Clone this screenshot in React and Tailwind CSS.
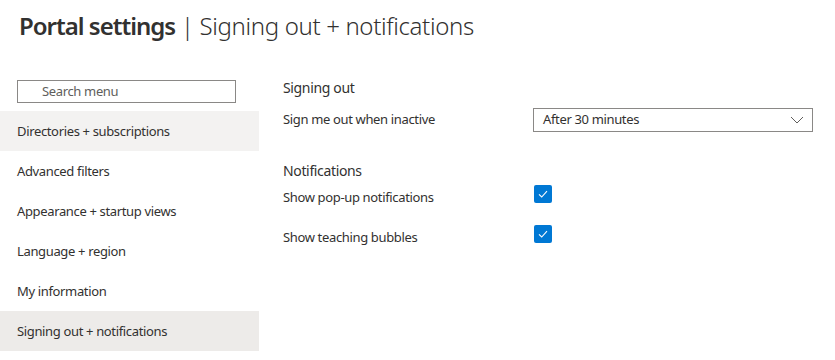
import React from "react";

const navItems = [
  "Directories + subscriptions",
  "Advanced filters",
  "Appearance + startup views",
  "Language + region",
  "My information",
  "Signing out + notifications",
];

const Check = () => (
  <div className="w-[18px] h-[18px] rounded-[2px] bg-[#0078d4] flex items-center justify-center">
    <svg width="12" height="12" viewBox="0 0 12 12" fill="none">
      <path d="M2 6.4 L4.7 9 L10 3.2" stroke="white" strokeWidth="1.1" />
    </svg>
  </div>
);

const App = () => {
  return (
    <div
      className="w-[835px] h-[360px] bg-white text-[#323130] overflow-hidden tracking-[-0.35px]"
      style={{ fontFamily: '"Noto Sans", "Open Sans", sans-serif' }}
    >
      {/* Header */}
      <header className="h-[52px] pl-[19px] pt-[8px]">
        <h1 className="text-[24px] leading-[36px]">
          <span className="font-semibold tracking-[-1px]">Portal settings</span>
          <span className="font-light tracking-[-0.35px]"> | Signing out + notifications</span>
        </h1>
      </header>

      <div className="flex pt-[28px]">
        {/* Left menu */}
        <nav className="w-[259px] flex flex-col">
          <div className="pl-[17px] pr-[23px] h-[31px]">
            <div className="w-[219px] h-[23px] border border-[#8a8886] flex items-center pl-[24px] text-[13px] text-[#605e5c]">
              Search menu
            </div>
          </div>
          {navItems.map((item, i) => (
            <div
              key={item}
              className={`h-[40px] flex items-center pl-[17px] pt-[2px] text-[13px] ${
                i === 0 ? "bg-[#f3f2f1]" : i === 5 ? "bg-[#edebe9]" : ""
              }`}
            >
              {item}
            </div>
          ))}
        </nav>

        {/* Settings */}
        <main className="pl-[24px] flex flex-col">
          <div className="text-[14px] h-[20px] leading-[20px] mt-[-2px]">Signing out</div>
          <div className="flex items-center h-[24px] mt-[10px]">
            <div className="w-[250px] text-[13px]">Sign me out when inactive</div>
            <div className="w-[280px] h-[24px] border border-[#8a8886] flex items-center justify-between pl-[9px] pr-[8px] text-[13px]">
              <span>After 30 minutes</span>
              <svg width="14" height="8" viewBox="0 0 14 8" fill="none">
                <path d="M1 1 L7 7 L13 1" stroke="#605e5c" strokeWidth="1" />
              </svg>
            </div>
          </div>
          <div className="text-[14px] h-[20px] leading-[20px] mt-[29px]">Notifications</div>
          <div className="flex items-start h-[24px] mt-[4px]">
            <div className="w-[251px] text-[13px] leading-[24px]">Show pop-up notifications</div>
            <Check />
          </div>
          <div className="flex items-start h-[24px] mt-[16px]">
            <div className="w-[251px] text-[13px] leading-[24px]">Show teaching bubbles</div>
            <Check />
          </div>
        </main>
      </div>
    </div>
  );
};

export default App;
